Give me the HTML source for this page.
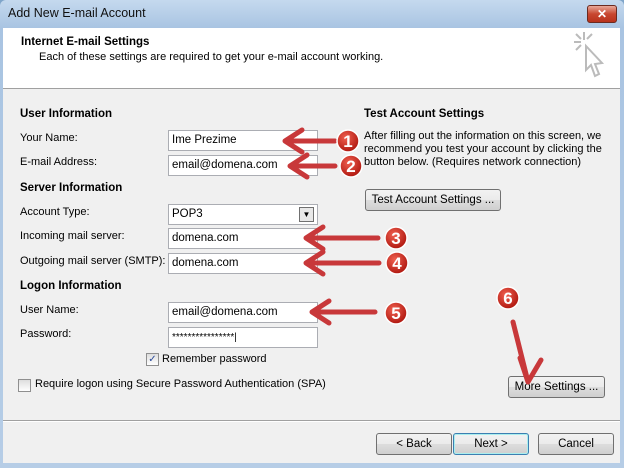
<!DOCTYPE html><html><head><style>
body{margin:0;width:624px;height:468px;overflow:hidden;font-family:"Liberation Sans",sans-serif;font-size:11px;color:#000;background:#7fa5c9}
.abs{position:absolute}
.win{position:absolute;left:0;top:0;width:624px;height:468px;background:linear-gradient(#c5d9ee,#a9c4e2 28px,#b6cde6);border-radius:6px 6px 0 0}
.title{left:8px;top:6px;font-size:12.5px;color:#111}
.close{left:587px;top:5px;width:28px;height:16px;border:1px solid #6b2a20;border-radius:3px;background:linear-gradient(#e9a99a,#c8472f 50%,#b8321c);color:#fff;font-weight:bold;text-align:center;line-height:16px;font-size:12px}
.head{left:3px;top:28px;width:617px;height:60px;background:#fff;border-bottom:1px solid #a0a0a0}
.body{left:3px;top:89px;width:617px;height:374px;background:#f0f0f0}
.b{font-weight:bold;font-size:11.5px}
.in{position:absolute;left:168px;width:150px;height:21px;background:#fff;border:1px solid #abadb3;font-size:11.5px;line-height:19px;padding-left:3px;box-sizing:border-box}
.btn{position:absolute;height:20px;border:1px solid #707070;border-radius:3px;background:linear-gradient(#f2f2f2,#ebebeb 50%,#dddddd 51%,#cfcfcf);text-align:center;line-height:20px;font-size:11.5px}
.cb{position:absolute;width:11px;height:11px;border:1px solid #8f8f8f;background:linear-gradient(#ddd,#fff)}
</style></head><body>
<div class="win"></div>
<div class="abs title">Add New E-mail Account</div>
<div class="abs close">✕</div>
<div class="abs head"></div>
<div class="abs b" style="left:21px;top:36px">Internet E-mail Settings</div>
<div class="abs" style="left:39px;top:51px">Each of these settings are required to get your e-mail account working.</div>
<svg class="abs" style="left:570px;top:30px" width="40" height="50"><g stroke="#bbb" stroke-width="2" fill="none"><line x1="14" y1="2" x2="14" y2="10"/><line x1="4" y1="12" x2="11" y2="12"/><line x1="6" y1="4" x2="11" y2="9"/><line x1="22" y1="4" x2="17" y2="9"/><line x1="6" y1="20" x2="11" y2="15"/><path d="M16 16 L16 40 L21 35 L25 46 L29 44 L25 34 L32 33 Z" fill="#fff"/></g></svg>
<div class="abs body"></div>
<div class="abs" style="left:3px;top:420px;width:617px;border-top:1px solid #a0a0a0;border-bottom:1px solid #fff"></div>

<div class="abs b" style="left:20px;top:108px">User Information</div>
<div class="abs" style="left:20px;top:132px">Your Name:</div>
<div class="abs" style="left:20px;top:156px">E-mail Address:</div>
<div class="abs b" style="left:20px;top:182px">Server Information</div>
<div class="abs" style="left:20px;top:206px">Account Type:</div>
<div class="abs" style="left:20px;top:230px">Incoming mail server:</div>
<div class="abs" style="left:20px;top:255px">Outgoing mail server (SMTP):</div>
<div class="abs b" style="left:20px;top:280px">Logon Information</div>
<div class="abs" style="left:20px;top:304px">User Name:</div>
<div class="abs" style="left:20px;top:328px">Password:</div>

<div class="in" style="top:130px">Ime Prezime</div>
<div class="in" style="top:155px">email@domena.com</div>
<div class="in" style="top:204px">POP3<div class="abs" style="right:3px;top:2px;width:13px;height:13px;border:1px solid #707070;background:#e8e8e8;font-size:8px;line-height:13px;text-align:center">▼</div></div>
<div class="in" style="top:228px">domena.com</div>
<div class="in" style="top:253px">domena.com</div>
<div class="in" style="top:302px">email@domena.com</div>
<div class="in" style="top:327px;font-size:10px">****************|</div>

<div class="cb" style="left:146px;top:353px;font-size:10px;line-height:11px;color:#2a4a9a;text-align:center">✓</div>
<div class="abs" style="left:162px;top:353px">Remember password</div>
<div class="cb" style="left:18px;top:379px"></div>
<div class="abs" style="left:35px;top:378px">Require logon using Secure Password Authentication (SPA)</div>

<div class="abs b" style="left:364px;top:108px">Test Account Settings</div>
<div class="abs" style="left:364px;top:130px;line-height:13px;width:250px">After filling out the information on this screen, we recommend you test your account by clicking the button below. (Requires network connection)</div>
<div class="btn" style="left:365px;top:189px;width:134px">Test Account Settings ...</div>
<div class="btn" style="left:508px;top:376px;width:95px">More Settings ...</div>
<div class="btn" style="left:376px;top:433px;width:74px">&lt; Back</div>
<div class="btn" style="left:453px;top:433px;width:74px;border-color:#3c7fb1;box-shadow:inset 0 0 0 1px #aee">Next &gt;</div>
<div class="btn" style="left:538px;top:433px;width:74px">Cancel</div>

<svg class="abs" style="left:0;top:0" width="624" height="468">
<defs><radialGradient id="g" cx="40%" cy="35%" r="65%"><stop offset="0" stop-color="#f06050"/><stop offset="1" stop-color="#b01810"/></radialGradient></defs>
<g stroke="#c8383a" stroke-width="5" fill="none" stroke-linecap="round" stroke-linejoin="round">
<path d="M335 141 L285 141 M302 130 L285 141 L302 152"/>
<path d="M335 166 L290 166 M307 155 L290 166 L307 177"/>
<path d="M378 238 L306 238 M323 227 L306 238 L323 249"/>
<path d="M379 263 L306 263 M323 252 L306 263 L323 274"/>
<path d="M375 312 L312 312 M329 301 L312 312 L329 323"/>
<path d="M513 322 L528 382 M520 358 L528 382 L541 360"/>
</g>
<g stroke="#fff" stroke-width="1.5" fill="url(#g)">
<circle cx="348" cy="141" r="11"/><circle cx="351" cy="166" r="11"/><circle cx="396" cy="238" r="11"/><circle cx="397" cy="263" r="11"/><circle cx="396" cy="313" r="11"/><circle cx="508" cy="298" r="11"/>
</g>
<g fill="#fff" font-family="Liberation Sans" font-weight="bold" font-size="17" text-anchor="middle">
<text x="348" y="147">1</text><text x="351" y="172">2</text><text x="396" y="244">3</text><text x="397" y="269">4</text><text x="396" y="319">5</text><text x="508" y="304">6</text>
</g></svg>
</body></html>
